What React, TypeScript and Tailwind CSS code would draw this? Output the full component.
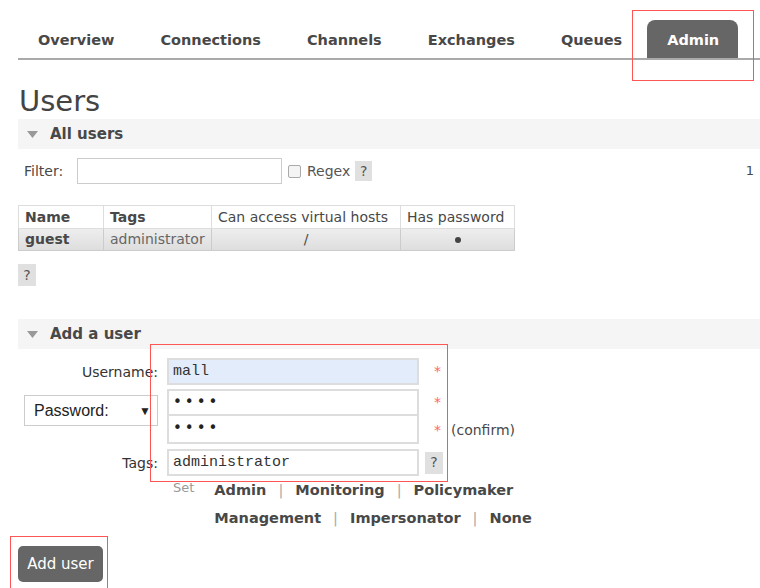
import React from 'react';

const TABS = ['Overview', 'Connections', 'Channels', 'Exchanges', 'Queues', 'Admin'];

const TAG_ROWS = [
  ['Admin', 'Monitoring', 'Policymaker'],
  ['Management', 'Impersonator', 'None'],
];

function Help({ className = '' }: { className?: string }) {
  return (
    <span className={`inline-flex h-[20px] w-[17px] items-center justify-center bg-[#e0e0e0] text-[14px] text-[#555] ${className}`}>
      ?
    </span>
  );
}

function SectionHeader({ title }: { title: string }) {
  return (
    <div className="flex h-[30px] items-center bg-[#f5f5f5] pl-[9px]">
      <svg width="11" height="7" viewBox="0 0 11 7" className="mr-[12px]">
        <path d="M0 0 L11 0 L5.5 7 Z" fill="#999" />
      </svg>
      <span className="text-[15px] font-bold text-[#484848]">{title}</span>
    </div>
  );
}

export default function App() {
  return (
    <div
      className="relative h-[588px] w-[760px] overflow-hidden bg-white text-[14px] text-[#484848]"
      style={{ fontFamily: '"DejaVu Sans", Verdana, sans-serif' }}
    >
      {/* tabs */}
      <div className="ml-[18px] border-b-2 border-[#aaa]">
        <ul className="-ml-[3px] flex h-[58px] items-end pt-[20px]">
          {TABS.map((t) =>
            t === 'Admin' ? (
              <li key={t} className="ml-[2px] flex h-[38px] items-center rounded-t-[8px] bg-[#666] pl-[20px] pr-[19px] pt-[3px] text-[14.5px] font-bold text-white">
                {t}
              </li>
            ) : (
              <li key={t} className="flex h-[38px] items-center px-[23px] pt-[3px] text-[14.5px] font-bold text-[#484848]">
                {t}
              </li>
            ),
          )}
        </ul>
      </div>

      <div className="ml-[18px]">
        <h1 className="mt-[24px] h-[35px] pl-[1px] text-[29px] leading-[35px] text-[#444]">Users</h1>

        <SectionHeader title="All users" />

        {/* filter */}
        <div className="mt-[9px] flex items-center">
          <span className="ml-[6px] w-[53px]">Filter:</span>
          <input className="h-[26px] w-[205px] border border-[#ccc] bg-white" />
          <span className="ml-[6px] h-[13px] w-[13px] rounded-[2px] border border-[#aaa] bg-[#f4f4f4]" />
          <span className="ml-[6px] text-[#555]">Regex</span>
          <Help className="ml-[5px]" />
          <span className="ml-auto mr-[6px] text-[13px]">1</span>
        </div>

        {/* table */}
        <table className="mt-[21px] border-collapse text-[14px]">
          <thead>
            <tr className="h-[23px]">
              <th className="w-[85px] border border-[#ddd] pl-[6px] text-left font-bold">Name</th>
              <th className="w-[108px] border border-[#ddd] pl-[6px] text-left font-bold">Tags</th>
              <th className="w-[189px] border border-[#ddd] px-[6px] text-left font-normal">Can access virtual hosts</th>
              <th className="w-[114px] border border-[#ddd] px-[6px] text-left font-normal">Has password</th>
            </tr>
          </thead>
          <tbody>
            <tr className="h-[22px] bg-gradient-to-b from-[#eee] to-[#ddd]">
              <td className="border border-[#ccc] pl-[6px] font-bold">guest</td>
              <td className="border border-[#ccc] pl-[6px] text-[#666]">administrator</td>
              <td className="border border-[#ccc] text-center">/</td>
              <td className="border border-[#ccc] text-center">
                <span className="inline-block h-[6px] w-[6px] rounded-full bg-[#444] align-middle" />
              </td>
            </tr>
          </tbody>
        </table>

        <Help className="mt-[13px] h-[22px] w-[18px]" />

        <div className="mt-[33px]">
          <SectionHeader title="Add a user" />
        </div>

        {/* form */}
        <div className="mt-[9px] grid grid-cols-[140px_252px_auto] items-center gap-x-[9px]">
          <span className="self-center pt-[2px] text-right text-[#333]">Username:</span>
          <div className="h-[27px] border-2 border-[#ddd] bg-[#e3ecfa] pl-[4px] font-['Liberation_Mono',monospace] text-[15px] leading-[23px] text-[#333]">
            mall
          </div>
          <span className="ml-[6px] text-[#f66]">*</span>

          <div className="row-span-2 self-start pt-[10px]">
            <div className="ml-[6px] flex h-[31px] w-[134px] items-center justify-between border border-[#ccc] pl-[9px] pr-[6px] font-['Liberation_Sans',Arial,sans-serif] text-[16px] text-[#222]">
              Password:
              <span className="text-[12px]">▼</span>
            </div>
          </div>
          <div className="mt-[4px] h-[27px] border-2 border-[#ddd] bg-white pl-[4px] text-[15px] leading-[22px] tracking-[3px] text-[#222]">
            ••••
          </div>
          <span className="mt-[4px] ml-[6px] text-[#f66]">*</span>

          <div className="h-[28px] border-2 border-t-0 border-[#ddd] bg-white pl-[4px] text-[15px] leading-[25px] tracking-[3px] text-[#222]">
            ••••
          </div>
          <span className="ml-[6px] text-[#f66]">
            *<span className="ml-[10px] text-[#484848]">(confirm)</span>
          </span>

          <span className="mt-[5px] pt-[2px] text-right text-[#333]">Tags:</span>
          <div className="mt-[5px] h-[27px] border-2 border-[#ddd] bg-white pl-[4px] font-['Liberation_Mono',monospace] text-[15px] leading-[23px] text-[#333]">
            administrator
          </div>
          <Help className="mt-[5px] h-[22px] w-[18px] -ml-[3px]" />
        </div>

        <div className="ml-[155px] mt-[2px] flex">
          <span className="text-[13px] text-[#999]">Set</span>
          <div className="ml-[20px] mt-[3px] flex flex-col gap-[10px] text-[14.5px] font-bold leading-[18px] text-[#484848]">
            {TAG_ROWS.map((row, i) => (
              <div key={i} className="flex">
                {row.map((tag, j) => (
                  <span key={tag} className="flex">
                    {j > 0 && <span className="mx-[12px] font-normal text-[#aaa]">|</span>}
                    {tag}
                  </span>
                ))}
              </div>
            ))}
          </div>
        </div>

        <button className="mt-[19px] h-[36px] w-[85px] rounded-[5px] bg-[#666] text-[15px] text-white">
          Add user
        </button>
      </div>

      {/* annotation boxes */}
      <div className="pointer-events-none absolute left-[632px] top-[10px] h-[71px] w-[122px] border border-[#f55]" />
      <div className="pointer-events-none absolute left-[150px] top-[344px] h-[138px] w-[298px] border border-[#f55]" />
      <div className="pointer-events-none absolute left-[10px] top-[536px] h-[60px] w-[98px] border border-[#f55]" />
    </div>
  );
}
